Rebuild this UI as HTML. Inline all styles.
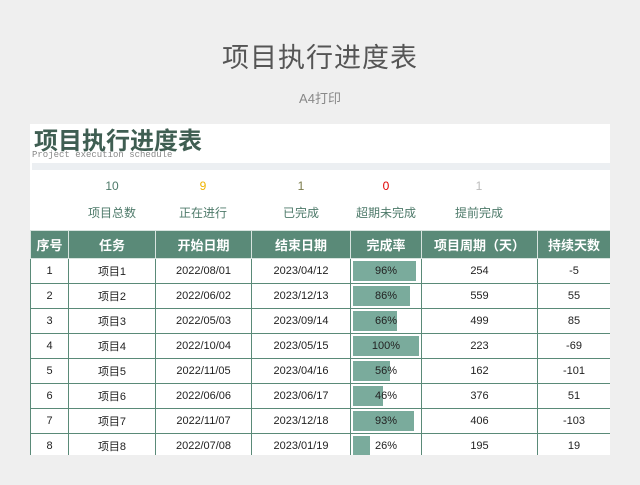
<!DOCTYPE html>
<html><head><meta charset="utf-8"><style>
body{margin:0;width:640px;height:485px;background:#efefef;font-family:"Liberation Sans","Noto Sans CJK SC",sans-serif;position:relative;overflow:hidden}
.t{position:absolute;left:0;width:640px;text-align:center}
.sheet{position:absolute;left:30px;top:124px;width:580px;height:331px;background:#fff;overflow:hidden}
.abs{position:absolute}
table{position:absolute;left:0;top:106px;border-collapse:collapse;width:580px;table-layout:fixed}
th{background:#5a8a78;color:#fff;font-weight:bold;font-size:13px;height:27px;border:1px solid #d8e4df;padding:0}
td{height:24px;border:1px solid #5a8a78;font-size:11px;text-align:center;padding:0;color:#222;position:relative}
.b{position:absolute;left:2px;top:2px;bottom:2px;background:#7aab9c}
.p{position:relative}
.n{position:absolute;font-size:12px;width:80px;text-align:center}
.l{position:absolute;font-size:12px;color:#4e7a6a;width:90px;text-align:center}
</style></head><body>
<div class="t" style="top:36px;font-size:27px;color:#555;letter-spacing:1px">项目执行进度表</div>
<div class="t" style="top:88px;font-size:13px;color:#888">A4打印</div>
<div class="sheet">
<div class="abs" style="left:4px;top:-3px;font-size:24px;font-weight:bold;color:#3f5e52">项目执行进度表</div>
<div class="abs" style="left:2px;top:26px;font-size:9px;color:#888;font-family:'Liberation Mono',monospace">Project execution schedule</div>
<div class="abs" style="left:2px;top:39px;width:578px;height:7px;background:#eceff2"></div>
<div class="n" style="left:42px;top:55px;color:#4e7a6a">10</div>
<div class="n" style="left:133px;top:55px;color:#f0b400">9</div>
<div class="n" style="left:231px;top:55px;color:#7a7a4a">1</div>
<div class="n" style="left:316px;top:55px;color:#e00000">0</div>
<div class="n" style="left:409px;top:55px;color:#bbb">1</div>
<div class="l" style="left:37px;top:80px">项目总数</div>
<div class="l" style="left:128px;top:80px">正在进行</div>
<div class="l" style="left:226px;top:80px">已完成</div>
<div class="l" style="left:311px;top:80px">超期未完成</div>
<div class="l" style="left:404px;top:80px">提前完成</div>
<table>
<colgroup><col style="width:38px"><col style="width:87px"><col style="width:96px"><col style="width:99px"><col style="width:71px"><col style="width:116px"><col style="width:73px"></colgroup>
<tr><th>序号</th><th>任务</th><th>开始日期</th><th>结束日期</th><th>完成率</th><th>项目周期（天）</th><th>持续天数</th></tr>
<tr><td>1</td><td>项目1</td><td>2022/08/01</td><td>2023/04/12</td><td><div class="b" style="width:63px"></div><span class="p">96%</span></td><td>254</td><td>-5</td></tr>
<tr><td>2</td><td>项目2</td><td>2022/06/02</td><td>2023/12/13</td><td><div class="b" style="width:57px"></div><span class="p">86%</span></td><td>559</td><td>55</td></tr>
<tr><td>3</td><td>项目3</td><td>2022/05/03</td><td>2023/09/14</td><td><div class="b" style="width:44px"></div><span class="p">66%</span></td><td>499</td><td>85</td></tr>
<tr><td>4</td><td>项目4</td><td>2022/10/04</td><td>2023/05/15</td><td><div class="b" style="width:66px"></div><span class="p">100%</span></td><td>223</td><td>-69</td></tr>
<tr><td>5</td><td>项目5</td><td>2022/11/05</td><td>2023/04/16</td><td><div class="b" style="width:37px"></div><span class="p">56%</span></td><td>162</td><td>-101</td></tr>
<tr><td>6</td><td>项目6</td><td>2022/06/06</td><td>2023/06/17</td><td><div class="b" style="width:30px"></div><span class="p">46%</span></td><td>376</td><td>51</td></tr>
<tr><td>7</td><td>项目7</td><td>2022/11/07</td><td>2023/12/18</td><td><div class="b" style="width:61px"></div><span class="p">93%</span></td><td>406</td><td>-103</td></tr>
<tr><td>8</td><td>项目8</td><td>2022/07/08</td><td>2023/01/19</td><td><div class="b" style="width:17px"></div><span class="p">26%</span></td><td>195</td><td>19</td></tr>
</table>
</div>
</body></html>
